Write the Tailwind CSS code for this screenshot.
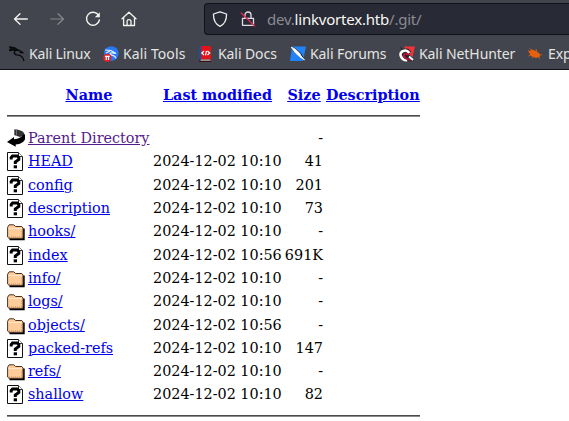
<!DOCTYPE html>
<html lang="en">
<head>
<meta charset="utf-8">
<title>Index of /.git</title>
<script src="https://cdn.jsdelivr.net/npm/@tailwindcss/browser@4"></script>
</head>
<body class="h-[421px] w-[569px] overflow-hidden bg-white">
<svg class="hidden">
  <symbol id="unknown" viewBox="0 0 16 19">
    <path d="M.5.5h11l4 4v14H.5z" fill="#fff" stroke="#111" stroke-width="1"/>
    <path d="M11.500.5v4h4" fill="#fff" stroke="#333" stroke-width="1"/>
    <path d="M4.200 7.600V5.500L5.500 4h4.800l1.500 1.500v2L8.300 10v2" fill="none" stroke="#000" stroke-width="3"/>
    <path d="M6.700 13.300H10v3H6.700z" fill="#000"/>
  </symbol>
  <symbol id="folder" viewBox="0 0 18 17">
    <path d="M2.500 15.300h14.200V4.500" fill="none" stroke="#000" stroke-width="2"/>
    <path d="M.6 13V3.200L2.200.8h4.600l1.700 1.700h6.300l1.200 1.500v9.500l-1 .8H2z" fill="#fc9" stroke="#4a3020" stroke-width="1"/>
    <path d="M1.500 4.600h13.300" stroke="#ffe8cf" stroke-width="1"/>
    <path d="M2 13h12.800V6" fill="none" stroke="#b98050" stroke-width=".8" stroke-dasharray="1 1"/>
  </symbol>
  <symbol id="back" viewBox="0 0 18 18">
    <path d="M7 .5c6-.3 10.500 2 10.500 5.500L13 8 7 6z" fill="#333"/>
    <path d="M7.500 .5v5.500M9.500 .7v6" stroke="#888" stroke-width=".7"/>
    <path d="M18 5.500v4.700c-1 3-4.600 4.800-9.300 5.300v2.300L0 13l7-5v2.300c4.500-.3 7.500-2 9-4.500z" fill="#000"/>
  </symbol>
</svg>

<header class="flex h-[70px] flex-col border-b border-[#101116] bg-[#43454e] font-['Noto_Sans',sans-serif]">
  <div class="flex h-9 shrink-0 items-center pt-px">
    <svg class="ml-[13px] mt-px h-4 w-4 shrink-0" viewBox="0 0 16 16" fill="none" stroke="#f4f4ef" stroke-width="1.300" stroke-linecap="round" stroke-linejoin="round"><path d="M14.300 8H1.500M7 2.700 1.500 8 7 13.300"/></svg>
    <svg class="ml-[20px] mt-px h-4 w-4 shrink-0" viewBox="0 0 16 16" fill="none" stroke="#86878c" stroke-width="1.200" stroke-linecap="round" stroke-linejoin="round"><path d="M1.700 8h12.800M9 2.700 14.500 8 9 13.300"/></svg>
    <svg class="ml-[20px] mt-px h-4 w-4 shrink-0" viewBox="0 0 16 16"><path d="M13.500 4.200A6.500 6.500 0 1 0 14.400 9" fill="none" stroke="#f4f4ef" stroke-width="1.400" stroke-linecap="round"/><path d="M14.800 1.300v5H9.800z" fill="#f4f4ef"/></svg>
    <svg class="ml-[20px] h-4 w-4 shrink-0" viewBox="0 0 16 16" fill="none" stroke="#f4f4ef" stroke-width="1.300" stroke-linejoin="round" stroke-linecap="round"><path d="M1 7.800 8 1.300l7 6.500M2.600 6.800v7.700h10.900V6.800M6.100 14.300V10c0-1.800 3.900-1.800 3.900 0v4.300"/></svg>
    <div class="ml-[67px] flex h-8 flex-1 items-center rounded-l-[4px] border border-r-0 border-[#101116] bg-[#282a36]">
      <svg class="ml-[7px] h-4 w-4 shrink-0" viewBox="0 0 16 16" fill="none" stroke="#efefef" stroke-width="1.300" stroke-linejoin="round"><path d="M8 .8 14.500 3c.2 6-1.500 10-6.500 12.300C3 13 1.300 9 1.500 3z"/></svg>
      <svg class="ml-[12px] h-4 w-4 shrink-0" viewBox="0 0 16 16" fill="none"><path d="M5 7V4c0-4 6-4 6 0v3M2.500 7.300h11v7h-11z" stroke="#dedee2" stroke-width="1.300" stroke-linejoin="round"/><path d="m1.200 2 13.300 13" stroke="#e22850" stroke-width="1.300" stroke-linecap="round"/></svg>
      <div class="ml-[11px] whitespace-nowrap text-[15px] leading-5 tracking-[-0.210px] text-[#8b8c93]"><span>dev.</span><span class="text-[#f8f8f2]">linkvortex.htb</span><span>/.git/</span></div>
    </div>
  </div>
  <nav class="flex h-[33px] shrink-0 items-center overflow-hidden whitespace-nowrap pt-[2px] text-[14px] leading-5 tracking-[-0.080px] text-[#e4e4e1]">
    <div class="flex w-[93px] shrink-0 items-center gap-[4px] pl-[9px] tracking-[-0.160px]">
      <svg class="h-4 w-4 shrink-0" viewBox="0 0 16 16" fill="none" stroke="#08090b" stroke-linecap="round" stroke-linejoin="round"><path d="M.5 1 6 2l3 2M.5 4.500 5 3.800l5 .4 4 2.600-3-.4M9 4.500c-4.500-.5-5 3.500-1 4.400 4 .4 6 1.500 6.800 5.600M1 3l5 .5" stroke-width="1.300"/></svg>
      <span>Kali Linux</span>
    </div>
    <div class="flex w-[96px] shrink-0 items-center gap-[4px] pl-[10px] tracking-[0.100px]">
      <svg class="h-4 w-4 shrink-0" viewBox="0 0 16 16"><circle cx="8.300" cy="7.500" r="7.300" fill="#2878f8"/><path d="m2 4 6 .5 5 3-4-.7c-3 0-2 2 .5 2.500 2 .3 3 1.500 3.500 3M3 7l4-2" fill="none" stroke="#e8f2ff" stroke-width="1.200"/><circle cx="4.300" cy="11.800" r="4.100" fill="#e42127"/><path d="M2 10.300h4.700M3.300 10.300v3.800M5.500 10.300v3.800" stroke="#fff" stroke-width="1.200"/></svg>
      <span>Kali Tools</span>
    </div>
    <div class="flex w-[92px] shrink-0 items-center gap-[4px] pl-[9px]">
      <svg class="h-4 w-4 shrink-0" viewBox="0 0 16 16"><path d="M1 0h12v15H1z" fill="#e31219"/><path d="M1 0h2v15H1z" fill="#0757a5"/><path d="M1.500 13.300H13V16H1.500z" fill="#3a1115"/><path d="M2.500 13.500h10v1.200h-10z" fill="#ccc"/><path d="M6 5 3.800 7 6 9M9.500 5l2.200 2-2.200 2M8.500 4.800l-1 4.600" fill="none" stroke="#fff" stroke-width="1.200"/></svg>
      <span>Kali Docs</span>
    </div>
    <div class="flex w-[110px] shrink-0 items-center gap-[4px] pl-[9px]">
      <svg class="h-4 w-4 shrink-0" viewBox="0 0 16 16"><path d="M2 .5h14L13 15H0z" fill="#2082f7"/><path d="m0 0 5 2 6 5 4.500 8-5.500-4-7-6z" fill="#20242c"/><path d="m1 1 4 2 4.500 4 1.500 3 3.500 4-4.500-3-4.500-4z" fill="#fff" stroke="#e4edf6" stroke-width="1"/></svg>
      <span>Kali Forums</span>
    </div>
    <div class="flex w-[129px] shrink-0 items-center gap-[4px] pl-[8px]">
      <svg class="h-4 w-4 shrink-0" viewBox="0 0 16 16"><path d="M5 .5h11L13.500 11 9 8z" fill="#ef3439"/><path d="m0 0 4 3 5-.5 3 3-2 3-1-1 6 7.500-9 .5L1 12 0 8l3-4z" fill="#20242a"/><path d="M10.300 7C7 2 0 5.500 1.800 10c1 3 4 5 6.200 4" fill="none" stroke="#fff" stroke-width="2.600"/><path d="M9.500 9C7 6.500 4 8 5 10.500c1 2 4 3.500 7 3" fill="none" stroke="#b9133f" stroke-width="2"/><path d="m10 10.500 4 3.500" stroke="#fff" stroke-width="1.800"/></svg>
      <span>Kali NetHunter</span>
    </div>
    <div class="flex shrink-0 items-center gap-[5px] pl-[7px]">
      <svg class="h-4 w-4 shrink-0" viewBox="0 0 16 16"><path d="M1.500 5.500 5 3.500l4 1.500 3.500 2.500.5 3-4 1.500-5-2z" fill="#e9600c"/><path d="M3 2.500 5 5M1 4.500l3 2M9 3l1 3M12 8.500l3 .5M4 9l-2.500 1M7 10l-2 2M11 10l2 3" stroke="#e9600c" stroke-width=".8"/></svg>
      <span>Exp</span>
    </div>
  </nav>
</header>

<main class="ml-[7px] w-[413px] pt-[14px] font-['DejaVu_Serif',serif] text-[14.370px] leading-[23.300px] text-black">
  <div class="grid h-[31px] grid-cols-[18px_122px_129px_38px_93px] gap-x-[3px] whitespace-nowrap text-center font-bold text-[#0000ee] underline">
    <span></span><a>Name</a><a>Last modified</a><a>Size</a><a>Description</a>
  </div>
  <hr class="h-[2px] border-0 border-t border-t-[#4b4b4b] bg-[#8b8b8b]">
  <div id="rows" class="pt-[10.200px]"></div>
  <hr class="mt-[8px] h-[2px] border-0 border-t border-t-[#4b4b4b] bg-[#8b8b8b]">
</main>
<script>
const t1 = '2024-12-02 10:10', t2 = '2024-12-02 10:56';
const entries = [
  ['back', 'Parent Directory', '', '-'], ['unknown', 'HEAD', t1, '41'],
  ['unknown', 'config', t1, '201'], ['unknown', 'description', t1, '73'],
  ['folder', 'hooks/', t1, '-'], ['unknown', 'index', t2, '691K'],
  ['folder', 'info/', t1, '-'], ['folder', 'logs/', t1, '-'],
  ['folder', 'objects/', t2, '-'], ['unknown', 'packed-refs', t1, '147'],
  ['folder', 'refs/', t1, '-'], ['unknown', 'shallow', t1, '82']
];
const icons = {
  unknown: '<svg class="mt-[2px] h-[19px] w-[16px]"><use href="#unknown"/></svg>',
  folder: '<svg class="mt-[4px] h-[17px] w-[18px]"><use href="#folder"/></svg>',
  back: '<svg class="mt-[2px] h-[18px] w-[18px]"><use href="#back"/></svg>'
};
document.getElementById('rows').innerHTML = entries.map(([icon, name, date, size]) => `
  <div class="grid h-[23.300px] grid-cols-[18px_122px_129px_38px_93px] gap-x-[3px] whitespace-nowrap">
    ${icons[icon]}
    <span><a class="${icon === 'back' ? 'text-[#551a8b] underline' : 'text-[#0000ee] underline'}">${name}</a></span>
    <span>${date}</span><span class="flex justify-end">${size}</span>
  </div>`).join('');
</script>
</body>
</html>
